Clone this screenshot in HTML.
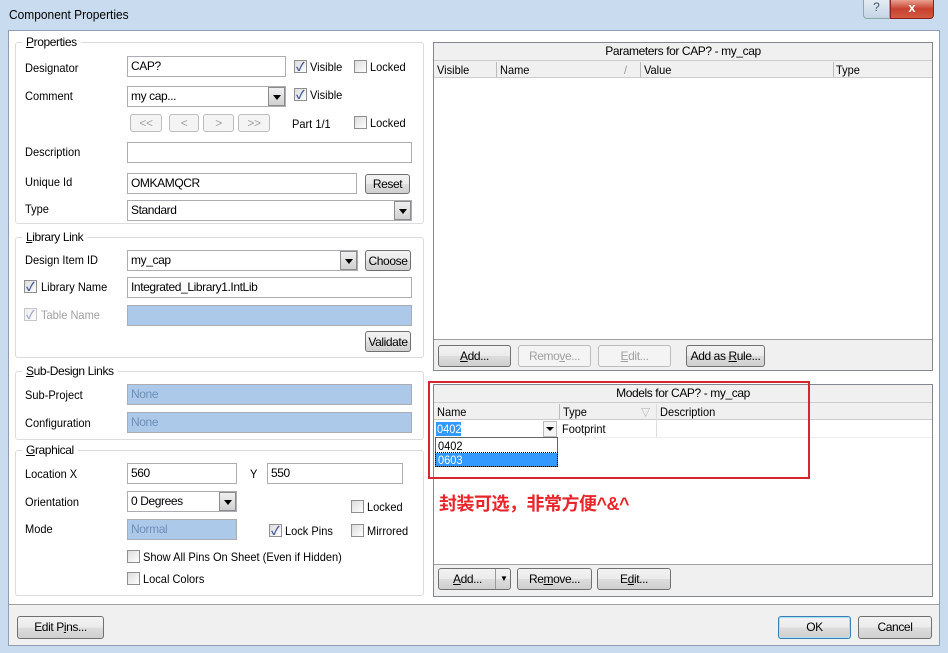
<!DOCTYPE html><html><head><meta charset="utf-8"><style>
*{margin:0;padding:0;box-sizing:border-box}
body{width:948px;height:653px;position:relative;overflow:hidden;font:12px "Liberation Sans","Noto Sans CJK SC",sans-serif;color:#000;background:#c9dbee}
.a{position:absolute}
.t{position:absolute;white-space:nowrap;font-size:12px;transform:scaleX(.92);transform-origin:left}
.fs{position:absolute;border:1px solid #dcdcdc;border-radius:3px}
.lg{position:absolute;background:#fff;padding:0 4px;font-size:12px;top:-8px;left:6px;letter-spacing:-.4px}
.in{position:absolute;background:#fff;border:1px solid #abadb3;height:21px;padding:2px 3px;font-size:12px;letter-spacing:-.4px;white-space:nowrap;overflow:hidden}
.dis{background:#adc9ea;color:#6d8fb8}
.btn{position:absolute;border:1px solid #707070;border-radius:3px;background:linear-gradient(#f2f2f2,#ebebeb 50%,#dddddd 51%,#cfcfcf);text-align:center;font-size:12px;line-height:20px;letter-spacing:-.4px;white-space:nowrap}
.bd{color:#a0a0a0;border-color:#bcbcbc;background:#f4f4f4}
.cb{position:absolute;width:13px;height:13px;border:1px solid #8e8f8f;background:linear-gradient(135deg,#dcdcdc,#fff)}
.cb.on::after{content:"✓";position:absolute;left:1px;top:-3px;font-size:12px;color:#4a5f97;font-weight:bold}
.dd{position:absolute;width:17px;height:19px;border:1px solid #8c8c8c;background:linear-gradient(#f0f0f0,#d0d0d0);top:0;right:0}
.dd::after{content:"";position:absolute;left:4px;top:7px;border:4px solid transparent;border-top:5px solid #000}
.hd{position:absolute;background:#f0f0f0;border-bottom:1px solid #ccc;text-align:center;font-size:12px;letter-spacing:-.4px}
</style></head><body>
<div class="t" style="left:9px;top:7px;font-size:13px">Component Properties</div>
<div class="a" style="left:863px;top:0;width:27px;height:19px;border:1px solid #8aa;border-top:none;border-radius:0 0 0 4px;background:linear-gradient(#e4ecf5,#c5d4e6);text-align:center;color:#456;font-size:12px">?</div>
<div class="a" style="left:890px;top:0;width:44px;height:19px;border:1px solid #822;border-top:none;border-radius:0 0 4px 0;background:linear-gradient(#e8a090,#c8412f 50%,#d35a40);text-align:center;color:#fff;font-weight:bold;font-size:13px">x</div>
<div class="a" style="left:8px;top:30px;width:932px;height:616px;background:#f0f0f0;border:1px solid #8e9fb2"></div>
<div class="a" style="left:9px;top:31px;width:930px;height:574px;background:#fff;border-bottom:1px solid #a0a0a0"></div>

<div class="fs" style="left:15px;top:42px;width:409px;height:182px"><span class="lg"><u>P</u>roperties</span></div>
<div class="t" style="left:25px;top:61px">Designator</div>
<div class="in" style="left:127px;top:56px;width:159px">CAP?</div>
<div class="cb on" style="left:294px;top:60px"></div><div class="t" style="left:310px;top:60px">Visible</div>
<div class="cb" style="left:354px;top:60px"></div><div class="t" style="left:370px;top:60px">Locked</div>
<div class="t" style="left:25px;top:89px">Comment</div>
<div class="in" style="left:127px;top:86px;width:159px">my cap...<div class="dd"></div></div>
<div class="cb on" style="left:294px;top:88px"></div><div class="t" style="left:310px;top:88px">Visible</div>
<div class="btn bd" style="left:130px;top:114px;width:32px;height:18px;line-height:16px">&lt;&lt;</div>
<div class="btn bd" style="left:169px;top:114px;width:30px;height:18px;line-height:16px">&lt;</div>
<div class="btn bd" style="left:203px;top:114px;width:31px;height:18px;line-height:16px">&gt;</div>
<div class="btn bd" style="left:238px;top:114px;width:32px;height:18px;line-height:16px">&gt;&gt;</div>
<div class="t" style="left:292px;top:117px">Part 1/1</div>
<div class="cb" style="left:354px;top:116px"></div><div class="t" style="left:370px;top:116px">Locked</div>
<div class="t" style="left:25px;top:145px">Description</div>
<div class="in" style="left:127px;top:142px;width:285px"></div>
<div class="t" style="left:25px;top:175px">Unique Id</div>
<div class="in" style="left:127px;top:173px;width:230px">OMKAMQCR</div>
<div class="btn" style="left:365px;top:174px;width:45px;height:20px;line-height:18px">Reset</div>
<div class="t" style="left:25px;top:202px">Type</div>
<div class="in" style="left:127px;top:200px;width:285px">Standard<div class="dd"></div></div>

<div class="fs" style="left:15px;top:237px;width:409px;height:121px"><span class="lg"><u>L</u>ibrary Link</span></div>
<div class="t" style="left:25px;top:253px">Design Item ID</div>
<div class="in" style="left:127px;top:250px;width:231px">my_cap<div class="dd"></div></div>
<div class="btn" style="left:365px;top:250px;width:46px;height:21px">Choose</div>
<div class="cb on" style="left:24px;top:280px"></div><div class="t" style="left:41px;top:280px">Library Name</div>
<div class="in" style="left:127px;top:277px;width:285px">Integrated_Library1.IntLib</div>
<div class="cb on" style="left:24px;top:308px;opacity:.5"></div><div class="t" style="left:41px;top:308px;color:#a0a0a0">Table Name</div>
<div class="in dis" style="left:127px;top:305px;width:285px"></div>
<div class="btn" style="left:365px;top:331px;width:46px;height:21px">Validate</div>

<div class="fs" style="left:15px;top:371px;width:409px;height:69px"><span class="lg"><u>S</u>ub-Design Links</span></div>
<div class="t" style="left:25px;top:388px">Sub-Project</div>
<div class="in dis" style="left:127px;top:384px;width:285px">None</div>
<div class="t" style="left:25px;top:416px">Configuration</div>
<div class="in dis" style="left:127px;top:412px;width:285px">None</div>

<div class="fs" style="left:15px;top:450px;width:409px;height:146px"><span class="lg"><u>G</u>raphical</span></div>
<div class="t" style="left:25px;top:467px">Location  X</div>
<div class="in" style="left:127px;top:463px;width:110px">560</div>
<div class="t" style="left:250px;top:467px">Y</div>
<div class="in" style="left:267px;top:463px;width:136px">550</div>
<div class="t" style="left:25px;top:495px">Orientation</div>
<div class="in" style="left:127px;top:491px;width:110px">0 Degrees<div class="dd"></div></div>
<div class="cb" style="left:351px;top:500px"></div><div class="t" style="left:367px;top:500px">Locked</div>
<div class="t" style="left:25px;top:522px">Mode</div>
<div class="in dis" style="left:127px;top:519px;width:110px">Normal</div>
<div class="cb on" style="left:269px;top:524px"></div><div class="t" style="left:285px;top:524px">Lock Pins</div>
<div class="cb" style="left:351px;top:524px"></div><div class="t" style="left:367px;top:524px">Mirrored</div>
<div class="cb" style="left:127px;top:550px"></div><div class="t" style="left:143px;top:550px">Show All Pins On Sheet (Even if Hidden)</div>
<div class="cb" style="left:127px;top:572px"></div><div class="t" style="left:143px;top:572px">Local Colors</div>

<div class="a" style="left:433px;top:42px;width:500px;height:329px;border:1px solid #828790;background:#fff"></div>
<div class="hd" style="left:434px;top:43px;width:498px;height:18px;line-height:17px">Parameters for CAP? - my_cap</div>
<div class="hd" style="left:434px;top:61px;width:498px;height:17px"></div>
<div class="t" style="left:437px;top:63px">Visible</div>
<div class="a" style="left:496px;top:62px;width:1px;height:15px;background:#bbb"></div>
<div class="t" style="left:500px;top:63px">Name</div><div class="t" style="left:624px;top:63px;color:#999">/</div>
<div class="a" style="left:640px;top:62px;width:1px;height:15px;background:#bbb"></div>
<div class="t" style="left:644px;top:63px">Value</div>
<div class="a" style="left:833px;top:62px;width:1px;height:15px;background:#bbb"></div>
<div class="t" style="left:836px;top:63px">Type</div>
<div class="a" style="left:434px;top:339px;width:498px;height:31px;background:#f0f0f0;border-top:1px solid #a0a0a0"></div>
<div class="btn" style="left:438px;top:345px;width:73px;height:22px"><u>A</u>dd...</div>
<div class="btn bd" style="left:518px;top:345px;width:73px;height:22px">Remo<u>v</u>e...</div>
<div class="btn bd" style="left:598px;top:345px;width:73px;height:22px"><u>E</u>dit...</div>
<div class="btn" style="left:686px;top:345px;width:79px;height:22px">Add as <u>R</u>ule...</div>

<div class="a" style="left:433px;top:384px;width:500px;height:213px;border:1px solid #828790;background:#fff"></div>
<div class="hd" style="left:434px;top:385px;width:498px;height:18px;line-height:17px">Models for CAP? - my_cap</div>
<div class="hd" style="left:434px;top:403px;width:498px;height:17px"></div>
<div class="t" style="left:437px;top:405px">Name</div>
<div class="a" style="left:559px;top:404px;width:1px;height:15px;background:#bbb"></div>
<div class="t" style="left:563px;top:405px">Type</div><div class="t" style="left:641px;top:404px;color:#999;font-size:10px">▽</div>
<div class="a" style="left:656px;top:404px;width:1px;height:33px;background:#ddd"></div>
<div class="t" style="left:660px;top:405px">Description</div>
<div class="a" style="left:434px;top:437px;width:498px;height:1px;background:#eee"></div>
<div class="a" style="left:436px;top:422px;width:25px;height:14px;background:#3399ff"></div>
<div class="t" style="left:437px;top:422px;color:#fff">0402</div>
<div class="a" style="left:543px;top:421px;width:14px;height:16px;border:1px solid #bbb;background:#f4f4f4"></div>
<div class="a" style="left:546px;top:427px;border:4px solid transparent;border-top:4px solid #000"></div>
<div class="t" style="left:562px;top:422px">Footprint</div>
<div class="a" style="left:435px;top:437px;width:123px;height:30px;border:1px solid #646464;background:#fff"></div>
<div class="t" style="left:438px;top:439px">0402</div>
<div class="a" style="left:436px;top:453px;width:121px;height:13px;background:#3399ff;outline:1px dotted #000"></div>
<div class="t" style="left:438px;top:453px;color:#fff">0603</div>
<div class="a" style="left:428px;top:381px;width:382px;height:98px;border:2px solid #d8262d"></div>
<div class="a" style="left:439px;top:490px;color:#e8252a;font-size:18px;font-weight:bold;white-space:nowrap;letter-spacing:-.5px">封装可选，非常方便^&amp;^</div>
<div class="a" style="left:434px;top:564px;width:498px;height:32px;background:#f0f0f0;border-top:1px solid #a0a0a0"></div>
<div class="btn" style="left:438px;top:568px;width:73px;height:22px;text-align:left;padding-left:14px"><u>A</u>dd...<span style="position:absolute;left:56px;top:0;height:20px;border-left:1px solid #999;padding-left:4px;font-size:8px">▼</span></div>
<div class="btn" style="left:517px;top:568px;width:75px;height:22px">Re<u>m</u>ove...</div>
<div class="btn" style="left:597px;top:568px;width:74px;height:22px">E<u>d</u>it...</div>

<div class="btn" style="left:17px;top:616px;width:87px;height:23px">Edit P<u>i</u>ns...</div>
<div class="btn" style="left:778px;top:616px;width:73px;height:23px;border-color:#3c7fb1;box-shadow:inset 0 0 0 1px #a8e0f8">OK</div>
<div class="btn" style="left:858px;top:616px;width:74px;height:23px">Cancel</div>
</body></html>
